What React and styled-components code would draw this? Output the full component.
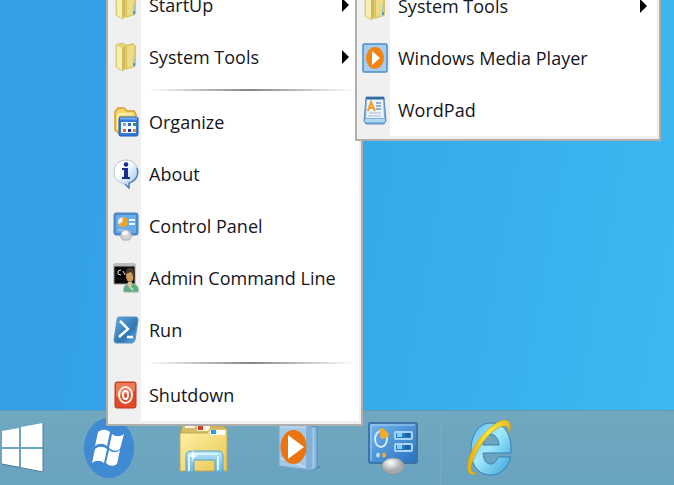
import React from 'react';
import styled, { createGlobalStyle } from 'styled-components';

const GlobalStyle = createGlobalStyle`
  body {
    margin: 0;
    overflow: hidden;
  }
`;

const Desktop = styled.main`
  position: relative;
  display: flex;
  flex-direction: column;
  justify-content: flex-end;
  height: 100vh;
  overflow: hidden;
  font-family: 'Open Sans', 'Noto Sans', sans-serif;
  background: linear-gradient(100deg, #349ee6 0%, #35a9ea 50%, #3eb9f1 100%);
`;

const Taskbar = styled.nav`
  display: flex;
  height: 74px;
  border-top: 1px solid #5f9cb4;
  background: linear-gradient(#70a8c0, #6aa3c0);
`;

const TaskButton = styled.button`
  display: flex;
  align-items: center;
  justify-content: ${(props) => (props.$start ? 'flex-start' : 'center')};
  width: ${(props) => (props.$start ? '61px' : '95px')};
  padding: 0 0 0 ${(props) => (props.$start ? '2px' : '0')};
  border: 0;
  border-right: ${(props) => (props.$divider ? '1px solid #74abc3' : '0')};
  background: none;
`;

const Menu = styled.ul`
  position: absolute;
  z-index: ${(props) => (props.$sub ? 2 : 1)};
  left: ${(props) => (props.$sub ? '355px' : '106px')};
  bottom: ${(props) => (props.$sub ? '344px' : '59px')};
  width: ${(props) => (props.$sub ? '306px' : '257px')};
  box-sizing: border-box;
  margin: 0;
  padding: 0 2px 3px 0;
  list-style: none;
  border: 2px solid #b0aead;
  background: linear-gradient(to right, #f0f0f0 33px, #fff 33px) content-box, #f0f0f0;
`;

const MenuButton = styled.button`
  display: grid;
  grid-template-columns: 33px 1fr 8px;
  column-gap: 8px;
  align-items: center;
  width: 100%;
  height: 52px;
  padding: 0 10px 0 0;
  border: 0;
  background: none;
  color: #15151c;
  font-family: inherit;
  font-size: 18px;
  line-height: 26px;
  text-align: left;
  white-space: nowrap;
`;

const IconCell = styled.span`
  display: flex;
  justify-content: center;
  padding-left: 2px;
`;

const Separator = styled.li`
  display: flex;
  align-items: center;
  height: 13px;
  padding: 0 4px 0 38px;

  &::before {
    content: '';
    flex: 1;
    height: 2px;
    background: linear-gradient(to right, #fff, #858585 50%, #fff);
  }
`;

const SmallIcon = ({ children }) => (
  <svg width="26" height="30" viewBox="0 0 26 30" aria-hidden="true">{children}</svg>
);

const FolderIcon = () => (
  <SmallIcon>
    <path d="M12 3l8-2 3 3v20l-2 1-8 3z" fill="#d9c566" />
    <path d="M14 4l7-1v21l-7 2z" fill="#ecdc88" />
    <path d="M3 3q0-1 2-1l5-1q2 0 2 2l1 3v20l-3 3-6-3-1-1z" fill="#e6d57c" stroke="#d2bd62" strokeWidth=".7" />
    <path d="M4 4l5 2v22l-5-3z" fill="#f6eeb4" />
    <path d="M9 6l3-2v22l-3 2z" fill="#d2bb57" />
    <path d="M20 14l2 1v10l-2 1z" fill="#b4cbb4" />
    <path d="M20 21h2v3h-2z" fill="#4c9edb" />
  </SmallIcon>
);

const OrganizeIcon = () => (
  <SmallIcon>
    <path d="M2 5l3-4h6l3 3h7l2 4v12l-16 7-5-4z" fill="#f9d86b" stroke="#d99a25" strokeWidth="1.5" />
    <path d="M5 7h14M5 8v14" stroke="#fff0ae" strokeWidth="2" />
    <rect x="6" y="10" width="19" height="19" rx="1.5" fill="#3479dc" stroke="#1f58b4" />
    <path d="M8 15h15v11H8z" fill="#f5f8ff" />
    <path d="M7 11.5h17" stroke="#72b1f6" strokeWidth="2" />
    <path d="M10 16h3v3h-3z" fill="#77a7e9" />
    <path d="M15 16h3v3h-3z" fill="#3669c5" />
    <path d="M20 16h3v3h-3z" fill="#3d9c43" />
    <path d="M10 22h3v3h-3z" fill="#df613c" />
    <path d="M15 22h3v3h-3z" fill="#292f86" />
    <path d="M20 22h3v3h-3z" fill="#e48a31" />
  </SmallIcon>
);

const AboutIcon = () => (
  <SmallIcon>
    <defs>
      <linearGradient id="bubble" x2="1" y2="1">
        <stop offset=".35" stopColor="#fff" />
        <stop offset="1" stopColor="#91bfed" />
      </linearGradient>
    </defs>
    <path d="M13 1C6 1 1 6 1 13c0 6 3 10 9 11l6 5v-5c5-1 9-5 9-11C25 6 20 1 13 1z" fill="url(#bubble)" stroke="#b6c4d8" />
    <path d="M24 9c2 7-1 13-8 15v5l-4-4" fill="none" stroke="#5682b8" strokeWidth="1.5" />
    <circle cx="13" cy="5.5" r="2.3" fill="#182d8e" />
    <path d="M9 9h6v9h2v2H9v-2h2v-7H9z" fill="#182d8e" />
  </SmallIcon>
);

const ControlIcon = () => (
  <SmallIcon>
    <rect x="1" y="2" width="24" height="22" rx="2" fill="#458ed6" stroke="#5685b4" />
    <path d="M3 4h20v18H3z" fill="#68ade9" />
    <circle cx="9.5" cy="11" r="4.5" fill="#eef6ff" />
    <path d="M9.5 11V6a5 5 0 11-4 7z" fill="#eca528" />
    <path d="M16 9h6M16 13h6" stroke="#edf8ff" strokeWidth="2" />
    <path d="M5 19h6" stroke="#bee1ff" />
    <path d="M13 18l4 3 2 4-3 4h-6l-3-4 2-4z" fill="#d2d4d6" stroke="#a7aaad" />
    <ellipse cx="12" cy="22" rx="3" ry="2" fill="#f8f8f8" />
  </SmallIcon>
);

const AdminIcon = () => (
  <SmallIcon>
    <path d="M1 1h21v20H1z" fill="#080808" stroke="#999" />
    <path d="M1 2h21" stroke="#bbb" strokeWidth="3" />
    <path d="M8 7l-3 1v3l3 1M10 8l2 4" stroke="#ddd" fill="none" />
    <path d="M11 29c-1-5 1-8 5-8h4c4 0 6 4 5 8z" fill="#60a981" stroke="#8ebda0" />
    <path d="M15 19h4v3l-2 3-3-3z" fill="#dfbd91" />
    <ellipse cx="17" cy="13" rx="4" ry="6" fill="#d29c61" />
    <path d="M12 12c0-9 10-10 10-1l-1 8c-1-5-1-8-3-10-2 1-4 1-6 3z" fill="#493726" />
    <path d="M17 24l3 3" stroke="#b8dcc4" strokeWidth="2" />
  </SmallIcon>
);

const RunIcon = () => (
  <SmallIcon>
    <defs>
      <linearGradient id="shell" x2="1" y2="1">
        <stop stopColor="#66a9db" />
        <stop offset=".6" stopColor="#2f77b5" />
        <stop offset="1" stopColor="#6fb2dc" />
      </linearGradient>
    </defs>
    <path d="M6 2h17q2 0 2 3l-3 20q-1 3-3 3H3q-2 0-2-3L4 5q0-3 2-3z" fill="url(#shell)" stroke="#5b92bd" />
    <path d="M7 6l8 8-9 8M14 22h6" stroke="#fff" strokeWidth="2.5" fill="none" />
  </SmallIcon>
);

const ShutdownIcon = () => (
  <SmallIcon>
    <rect x="2" y="2" width="21" height="26" rx="2" fill="#df4b29" stroke="#b83920" />
    <path d="M3 3h19v8L3 17z" fill="#ed7955" />
    <ellipse cx="12.5" cy="15" rx="6.5" ry="8" fill="none" stroke="#fff0e8" strokeWidth="2" />
    <ellipse cx="12.5" cy="15" rx="2.5" ry="4" fill="none" stroke="#fff" strokeWidth="2" />
  </SmallIcon>
);

const PlayerIcon = () => (
  <SmallIcon>
    <rect x="1" y="1" width="24" height="28" rx="1.5" fill="#a4cdf0" stroke="#4a8dc9" strokeWidth="1.5" />
    <ellipse cx="13" cy="15" rx="9" ry="11" fill="#f28311" />
    <path d="M10 8l8 7-8 7z" fill="#fff" />
  </SmallIcon>
);

const WordPadIcon = () => (
  <SmallIcon>
    <path d="M4 2h18l2 24-2 3H4l-2-3z" fill="#7db0d8" stroke="#5f8fb9" />
    <path d="M5 5h16l1 18H4z" fill="#eaf4ff" />
    <path d="M4 3h18" stroke="#356b9f" strokeWidth="2" />
    <path d="M3 24h20v3H3z" fill="#add8f2" />
    <path d="M6 16l3-9 4 9M7 13h5" fill="none" stroke="#f39b2c" strokeWidth="2" />
    <path d="M14 8h5M14 11h5M14 14h5" stroke="#456faf" />
    <path d="M7 18h12M6 21h13" stroke="#a9b6cb" />
  </SmallIcon>
);

const Arrow = () => (
  <svg width="8" height="14" viewBox="0 0 8 14" aria-hidden="true">
    <path d="M1 0l7 7-7 7z" fill="#000" />
  </svg>
);

const StartLogo = () => (
  <svg width="42" height="50" viewBox="0 0 42 50" aria-hidden="true">
    <path d="M0 8l17-3v19H0zM19 4l22-4v24H19zM0 26h17v18L0 41zM19 26h22v23l-22-4z" fill="#fff" />
    <path d="M41 0v49M0 41l41 8" stroke="#487d96" fill="none" />
  </svg>
);

const OrbLogo = () => (
  <svg width="50" height="60" viewBox="0 0 50 60" aria-hidden="true">
    <ellipse cx="25" cy="30" rx="25" ry="30" fill="#3f8ad2" />
    <path d="M14 14c4-3 8-3 12 0l-3 14c-4-3-8-3-12 0zM28 16c4 3 8 3 12 0l-4 15c-4 3-7 2-11-1zM11 31c4-3 8-3 12 0l-3 14c-4-3-8-3-12 0zM25 32c4 3 7 3 11 0l-3 14c-4 3-8 2-11-1z" fill="#fff" />
  </svg>
);

const ExplorerLogo = () => (
  <svg width="50" height="52" viewBox="0 0 50 52" aria-hidden="true">
    <defs>
      <linearGradient id="files" x2="1" y2="1">
        <stop stopColor="#fff2a8" />
        <stop offset="1" stopColor="#e8c754" />
      </linearGradient>
      <linearGradient id="stand" y2="1" x2="0">
        <stop stopColor="#b6e5fb" />
        <stop offset="1" stopColor="#63b3df" />
      </linearGradient>
    </defs>
    <path d="M2 7l3-6h12l3 3h25l3 4v37H1z" fill="#d7bd67" stroke="#a9974f" />
    <path d="M6 2h10v4H6zM18 4h13v5H18z" fill="#f9f5df" />
    <path d="M8 1h5v3H8z" fill="#39a839" />
    <path d="M19 4h5v4h-5z" fill="#ce4025" />
    <path d="M1 11h27l3-4h17v42H1z" fill="url(#files)" stroke="#c3a848" />
    <path d="M31 8h15v5H31z" fill="#fff" />
    <path d="M32 8h5v4h-5z" fill="#239ae7" />
    <path d="M7 51V34q0-5 5-5h27q5 0 5 5v17h-8V38H15v13z" fill="url(#stand)" stroke="#5d9fc8" />
    <path d="M10 49V35q0-3 3-3h26M39 34v14" stroke="#d7f6ff" strokeWidth="2" fill="none" />
    <path d="M14 27l1 6 4 1-4 1-1 6-1-6-4-1 4-1z" fill="#fff" />
  </svg>
);

const MediaLogo = () => (
  <svg width="44" height="50" viewBox="0 0 44 50" aria-hidden="true">
    <path d="M33 3l7 1v41l-7 3z" fill="#89b8dc" stroke="#5b91be" />
    <path d="M36 5v41" stroke="#d3e8f5" />
    <path d="M39 44l6-2-4 4z" fill="#5b8aa5" />
    <path d="M2 3h27l6 1v43L2 43z" fill="#a4c9e6" stroke="#79a7cc" />
    <path d="M29 3l6 1v43l-6-1z" fill="#82b0d7" />
    <path d="M3 4h26M3 35l25 9" stroke="#d3e8f7" />
    <ellipse cx="16.5" cy="24" rx="13" ry="17" fill="#ec7410" />
    <path d="M11 12l16 12-16 12z" fill="#fff" />
  </svg>
);

const ControlLogo = () => (
  <svg width="50" height="54" viewBox="0 0 50 54" aria-hidden="true">
    <defs>
      <linearGradient id="panel" x2="1" y2="1">
        <stop stopColor="#72b6ee" />
        <stop offset="1" stopColor="#2870bd" />
      </linearGradient>
      <radialGradient id="knob" cx=".4" cy=".3">
        <stop stopColor="#fff" />
        <stop offset="1" stopColor="#a6aaab" />
      </radialGradient>
    </defs>
    <rect x="1" y="2" width="48" height="40" rx="2" fill="url(#panel)" stroke="#3d75a9" strokeWidth="2" />
    <path d="M3 40V4h44" stroke="#a4d3f5" fill="none" />
    <ellipse cx="13" cy="18" rx="6" ry="8" stroke="#d4eafb" strokeWidth="2" fill="none" />
    <path d="M13 18l-2-10 4-1 6 6-2 4z" fill="#f2ad2c" />
    <rect x="27" y="11" width="17" height="7" rx="1" fill="#287cc5" stroke="#a8d4f5" strokeWidth="2" />
    <rect x="27" y="23" width="17" height="7" rx="1" fill="#287cc5" stroke="#a8d4f5" strokeWidth="2" />
    <path d="M29 14h5M29 26h5" stroke="#7fd3fb" strokeWidth="4" />
    <path d="M37 14h5M37 26h5" stroke="#1961a8" strokeWidth="4" />
    <ellipse cx="10" cy="34" rx="2" ry="2.5" fill="#a9def8" />
    <ellipse cx="16" cy="34" rx="2" ry="2.5" fill="#f5ab31" />
    <ellipse cx="25" cy="45" rx="11" ry="8" fill="url(#knob)" stroke="#909b9e" />
  </svg>
);

const InternetLogo = () => (
  <svg width="46" height="58" viewBox="0 0 46 58" aria-hidden="true">
    <defs>
      <linearGradient id="blueE" x2="1" y2="1">
        <stop stopColor="#5cb9eb" />
        <stop offset=".45" stopColor="#a3eafd" />
        <stop offset="1" stopColor="#319fd9" />
      </linearGradient>
      <linearGradient id="ring" x2="1">
        <stop stopColor="#e8ad0b" />
        <stop offset=".5" stopColor="#ffe83b" />
        <stop offset="1" stopColor="#e4b729" />
      </linearGradient>
    </defs>
    <path
      fillRule="evenodd"
      d="M45 34H17c1 14 12 14 15 4h13C41 50 34 56 25 56 12 56 5 46 5 31 5 15 13 4 25 4c14 0 21 12 20 30zM17 26h16c-1-14-15-14-16 0z"
      fill="url(#blueE)"
      stroke="#397faf"
    />
    <path d="M12 54C-2 61-1 42 8 28 18 10 41-7 44 5c1 3 0 7-1 10 0-5-1-8-5-8C25 8 8 33 5 48c0 5 2 7 7 6z" fill="url(#ring)" stroke="#b99a30" strokeWidth=".7" />
  </svg>
);

const MenuItem = ({ icon: Icon, label, submenu }) => (
  <li>
    <MenuButton type="button" aria-haspopup={submenu ? 'menu' : undefined}>
      <IconCell><Icon /></IconCell>
      <span>{label}</span>
      {submenu && <Arrow />}
    </MenuButton>
  </li>
);

const App = () => {
  return (
    <>
      <GlobalStyle />
      <Desktop>
        <Menu>
          <MenuItem icon={FolderIcon} label="StartUp" submenu />
          <MenuItem icon={FolderIcon} label="System Tools" submenu />
          <Separator />
          <MenuItem icon={OrganizeIcon} label="Organize" />
          <MenuItem icon={AboutIcon} label="About" />
          <MenuItem icon={ControlIcon} label="Control Panel" />
          <MenuItem icon={AdminIcon} label="Admin Command Line" />
          <MenuItem icon={RunIcon} label="Run" />
          <Separator />
          <MenuItem icon={ShutdownIcon} label="Shutdown" />
        </Menu>
        <Menu $sub>
          <MenuItem icon={FolderIcon} label="System Tools" submenu />
          <MenuItem icon={PlayerIcon} label="Windows Media Player" />
          <MenuItem icon={WordPadIcon} label="WordPad" />
        </Menu>
        <Taskbar aria-label="Taskbar">
          <TaskButton type="button" aria-label="Start" $start><StartLogo /></TaskButton>
          <TaskButton type="button" aria-label="Start menu"><OrbLogo /></TaskButton>
          <TaskButton type="button" aria-label="File Explorer"><ExplorerLogo /></TaskButton>
          <TaskButton type="button" aria-label="Windows Media Player"><MediaLogo /></TaskButton>
          <TaskButton type="button" aria-label="Control Panel" $divider><ControlLogo /></TaskButton>
          <TaskButton type="button" aria-label="Internet Explorer"><InternetLogo /></TaskButton>
        </Taskbar>
      </Desktop>
    </>
  );
};

export default App;
